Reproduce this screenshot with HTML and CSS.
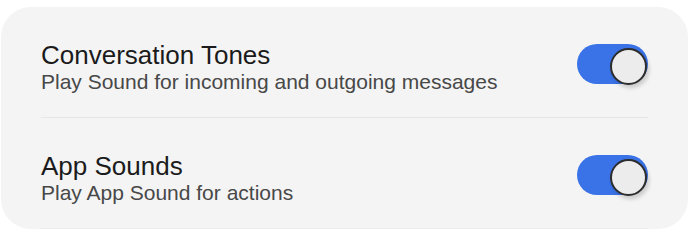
FILE: index.html
```html
<!DOCTYPE html>
<html lang="en">
<head>
<meta charset="utf-8">
<title>Sound settings</title>
<link rel="stylesheet" href="styles.css">
</head>
<body>
<section class="card">
  <div class="row">
    <div class="text">
      <div class="title">Conversation Tones</div>
      <div class="subtitle">Play Sound for incoming and outgoing messages</div>
    </div>
    <div class="toggle on"><span class="knob"></span></div>
  </div>
  <div class="row">
    <div class="text">
      <div class="title">App Sounds</div>
      <div class="subtitle">Play App Sound for actions</div>
    </div>
    <div class="toggle on"><span class="knob"></span></div>
  </div>
</section>
</body>
</html>
```

FILE: styles.css
```css
html, body {
  margin: 0;
  padding: 0;
  background: #ffffff;
}

body {
  font-family: "Liberation Sans", Arial, Helvetica, sans-serif;
  padding: 7px 2px 0 1px;
}

.card {
  background: #f4f4f4;
  border-radius: 30px;
  height: 222px;
  padding: 0 40px;
  overflow: hidden;
  box-sizing: border-box;
}

.row {
  display: flex;
  align-items: center;
  justify-content: space-between;
  height: 111px;
  padding: 9px 0 0 0;
  box-sizing: border-box;
  border-bottom: 1px solid #e6e6e6;
}

.row:last-child {
  border-bottom-color: #ececec;
}

.text {
  display: flex;
  flex-direction: column;
}

.title {
  font-size: 26px;
  line-height: 30px;
  color: #1b1b1b;
}

.subtitle {
  font-size: 21px;
  line-height: 24px;
  color: #484848;
}

.toggle {
  position: relative;
  width: 71px;
  height: 40px;
  border-radius: 20px;
  background: #d0d0d0;
  flex-shrink: 0;
  margin-top: -6px;
}

.toggle.on {
  background: #3a73e8;
}

.knob {
  position: absolute;
  top: 4px;
  right: 1px;
  width: 33px;
  height: 33px;
  border-radius: 50%;
  background: #ececec;
  border: 2px solid #2d2d2d;
  box-shadow: 2px 3px 4px rgba(0, 0, 0, 0.18);
}
```
